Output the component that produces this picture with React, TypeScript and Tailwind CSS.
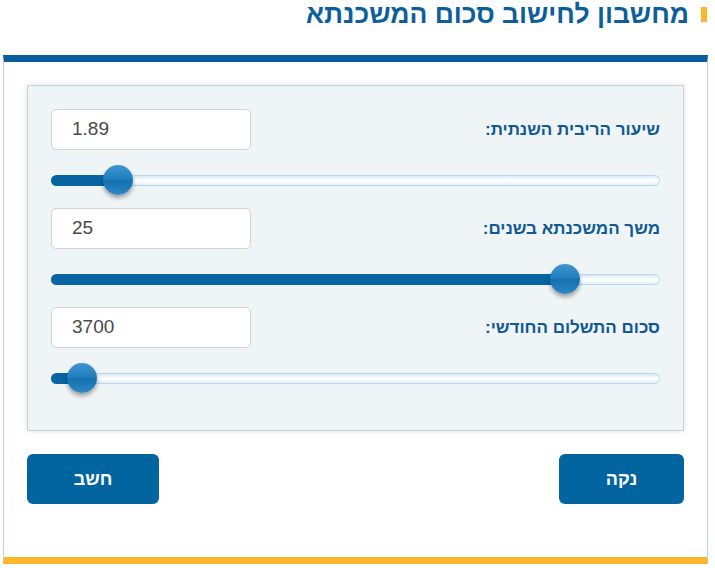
import { useState } from "react";

const fields = [
  { label: "שיעור הריבית השנתית:", value: "1.89", pct: 0.09 },
  { label: "משך המשכנתא בשנים:", value: "25", pct: 0.862 },
  { label: "סכום התשלום החודשי:", value: "3700", pct: 0.027 },
];

function Slider({ pct }: { pct: number }) {
  return (
    <div dir="ltr" className="relative mt-[14px] mb-[12px] h-8">
      <div className="absolute top-[10.5px] left-0 right-0 h-[11px] rounded-full border border-[#bcd5e8] bg-[linear-gradient(to_bottom,#d9e9f5,#ffffff_50%,#e3eff8)]" />
      <div
        className="absolute top-[10.5px] left-0 h-[11px] rounded-full bg-[#0765a1]"
        style={{ width: `calc(${pct} * (100% - 30px) + 15px)` }}
      />
      <div
        className="absolute top-[1px] h-[30px] w-[30px] rounded-full bg-[linear-gradient(to_bottom,#3f96d0,#1f7dbd_48%,#136fae_52%,#2f88c6)] shadow-[0_3px_4px_rgba(0,0,0,0.35)]"
        style={{ left: `calc(${pct} * (100% - 30px))` }}
      />
    </div>
  );
}

export default function App() {
  const [values] = useState(fields);

  return (
    <div
      dir="rtl"
      className="h-[568px] w-[715px] bg-white"
      style={{ fontFamily: '"Liberation Sans", Arial, sans-serif' }}
    >
      <div className="flex h-[55px] items-start pr-[8px]">
        <div className="mt-[7px] h-[15px] w-[6px] bg-[#fbb62b]" />
        <h1 className="mr-[12px] text-[26.5px] font-bold leading-[28px] text-[#0d5f9c]">
          מחשבון לחישוב סכום המשכנתא
        </h1>
      </div>

      <div className="mr-[7px] w-[705px] border-x border-t-[7px] border-b-[7px] border-x-[#c3d0da] border-t-[#085d9f] border-b-[#fbb62b] px-[23px] pt-[23px] pb-[53px]">
        <div className="border border-[#c6d0d6] bg-[#eff4f7] px-[23px] pt-[23px] pb-[24px] shadow-[0_0_6px_rgba(0,0,0,0.12)]">
          {values.map((f) => (
            <div key={f.label}>
              <div className="flex items-center justify-between">
                <label className="text-[17px] font-bold text-[#0f5a90]">{f.label}</label>
                <div
                  dir="ltr"
                  className="flex h-[41px] w-[200px] items-center rounded-[5px] border border-[#cfd4d8] bg-white pl-[20px] text-[19px] text-[#4a4a4a]"
                >
                  {f.value}
                </div>
              </div>
              <Slider pct={f.pct} />
            </div>
          ))}
        </div>

        <div className="mt-[23px] flex justify-between">
          <button className="h-[50px] w-[125px] rounded-[6px] bg-[#02659f] text-[18px] font-bold text-white">
            נקה
          </button>
          <button className="h-[50px] w-[132px] rounded-[6px] bg-[#02659f] text-[18px] font-bold text-white">
            חשב
          </button>
        </div>
      </div>
    </div>
  );
}
